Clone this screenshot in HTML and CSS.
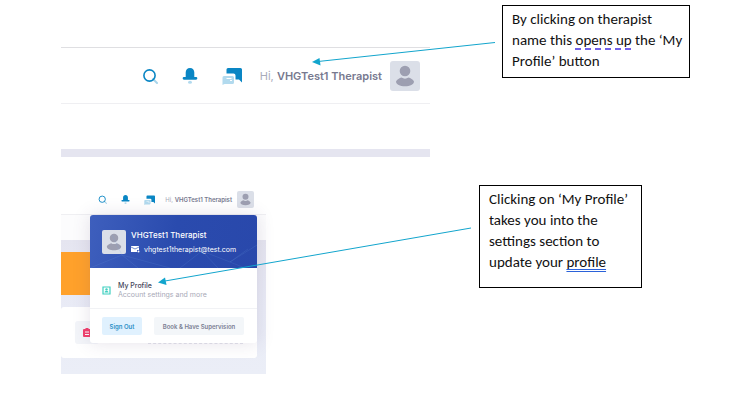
FILE: index.html
```html
<!DOCTYPE html>
<html lang="en">
<head>
  <meta charset="UTF-8" />
  <meta name="viewport" content="width=device-width, initial-scale=1" />
  <title>My Profile guide</title>
  <link rel="stylesheet" href="styles.css">
</head>
<body>
  <svg class="sprite" aria-hidden="true">
    <symbol id="search" viewBox="0 0 16 16">
      <path d="M11 11l4 4" stroke="#a9d5ea" stroke-width="2" stroke-linecap="round" />
      <circle cx="7.500" cy="7.500" r="5.600" fill="none" stroke="#0a86c4" stroke-width="1.600" />
    </symbol>
    <symbol id="bell" viewBox="0 0 16 16">
      <path d="M8 0c-2.700 0-4.300 1.800-4.300 4.500V9H2a1.300 1.300 0 0 0 0 2.700h12A1.300 1.300 0 0 0 14 9h-1.700V4.500C12.300 1.800 10.700 0 8 0z" fill="#0a86c4" />
      <ellipse cx="8" cy="14.300" rx="2" ry="1.500" fill="#b2daee" />
    </symbol>
    <symbol id="chat" viewBox="0 0 20 18">
      <path d="M6 1h12.500A1.500 1.500 0 0 1 20 2.500V15.500L17 12.500H13.500V8.500A2 2 0 0 0 11.500 6.500H4.500V2.500A1.500 1.500 0 0 1 6 1z" fill="#0a86c4" />
      <path d="M2 9h8.500a1.500 1.500 0 0 1 1.500 1.500v5a1.500 1.500 0 0 1-1.500 1.500H2.500L.5 18v-7.500A1.500 1.500 0 0 1 2 9z" fill="#b2daee" />
      <path d="M4.500 11.500h5M8 13.500h2" stroke="#fff" stroke-width="1" />
    </symbol>
    <symbol id="person" viewBox="0 0 30 30">
      <circle cx="15" cy="10" r="5.300" fill="#9d9fb1" />
      <path d="M6 20.500C7 18.300 9.500 17.200 11.500 16.500c2 1.500 5 1.500 7 0 2 .7 4.500 1.800 5.500 4 0 3-4 4.800-9 4.800s-9-1.800-9-4.800z" fill="#9d9fb1" />
    </symbol>
  </svg>

  <main class="guide">
    <section class="step">
      <div class="shot">
        <header class="topbar">
          <button class="icon-btn" aria-label="Search"><svg><use href="#search" /></svg></button>
          <button class="icon-btn" aria-label="Notifications"><svg><use href="#bell" /></svg></button>
          <button class="icon-btn chat" aria-label="Messages"><svg><use href="#chat" /></svg></button>
          <button class="user">
            <span class="name">Hi, <b>VHGTest1 Therapist</b></span>
            <svg class="avatar"><use href="#person" /></svg>
          </button>
        </header>
        <div class="blank"></div>
      </div>
      <p class="callout">By clicking on therapist name this <span class="grammar">opens up</span> the ‘My Profile’ button</p>
    </section>

    <section class="step step-profile">
      <div class="shot small">
        <header class="topbar">
          <button class="icon-btn" aria-label="Search"><svg><use href="#search" /></svg></button>
          <button class="icon-btn" aria-label="Notifications"><svg><use href="#bell" /></svg></button>
          <button class="icon-btn chat" aria-label="Messages"><svg><use href="#chat" /></svg></button>
          <button class="user">
            <span class="name">Hi, <b>VHGTest1 Therapist</b></span>
            <svg class="avatar"><use href="#person" /></svg>
          </button>
        </header>
        <div class="subbar"></div>
        <div class="content">
          <div class="banner"></div>
          <div class="card">
            <span class="card-icon">
              <svg viewBox="0 0 8 9"><path d="M1 1h1.500V0h3v1H7a1 1 0 0 1 1 1v6a1 1 0 0 1-1 1H1a1 1 0 0 1-1-1V2a1 1 0 0 1 1-1z" fill="#f2406c" /><path d="M2 4h4M2 6.500h4" stroke="#fff" /></svg>
            </span>
            <span class="card-line"></span>
          </div>
        </div>

        <div class="menu">
          <div class="menu-head">
            <svg class="net" viewBox="0 0 167 53" preserveAspectRatio="none">
              <path d="M0 53L32 40 48 53M32 40L22 20M32 40L80 53M90 53L112 36 140 47 167 30M112 36L128 53M140 47L155 53M140 47L158 34" />
            </svg>
            <svg class="avatar"><use href="#person" /></svg>
            <div class="who">
              <strong>VHGTest1 Therapist</strong>
              <a href="mailto:vhgtest1therapist@test.com">
                <svg viewBox="0 0 9 7"><path d="M0 0h8v4H6v2H0z" fill="#fff" /><path d="M0 1l4 2 4-2" fill="none" stroke="#3a5cb8" stroke-width=".7" /><circle cx="7.500" cy="5.500" r="1" fill="#fff" /></svg>
                vhgtest1therapist@test.com
              </a>
            </div>
          </div>
          <a class="menu-item" href="#profile">
            <svg viewBox="0 0 9 9"><path d="M1 1h7v7H1z" fill="none" stroke="#3fcfc0" stroke-width="1.200" /><circle cx="4.500" cy="3.400" r="1.200" fill="#3fcfc0" /><path d="M2.500 6.500a2 1.800 0 0 1 4 0z" fill="#3fcfc0" /></svg>
            <span><b>My Profile</b><small>Account settings and more</small></span>
          </a>
          <div class="menu-actions">
            <button class="sign-out">Sign Out</button>
            <button class="book">Book &amp; Have Supervision</button>
          </div>
        </div>
      </div>
      <p class="callout">Clicking on ‘My Profile’ takes you into the settings section to update your <span class="spelling">profile</span></p>
    </section>

    <svg class="arrows" viewBox="0 0 731 409" aria-hidden="true">
      <path d="M495 42.500L318 61.500M471 228L165 281" />
      <polygon points="312,62 319.500,58 320.500,65.500" />
      <polygon points="158,282.500 165,277.500 166.500,285" />
    </svg>
  </main>
</body>
</html>
```
FILE: styles.css
```css
* {
  box-sizing: border-box;
}

body {
  margin: 0;
  background: #fff;
  font-family: Inter, "Open Sans", sans-serif;
}

button {
  border: 0;
  padding: 0;
  background: none;
  font-family: inherit;
  cursor: pointer;
}

a {
  text-decoration: none;
}

.sprite {
  position: absolute;
  width: 0;
  height: 0;
}

.guide {
  position: relative;
  max-width: 731px;
  padding: 5px 41px 0 61px;
}

.step {
  display: flex;
  align-items: flex-start;
  justify-content: space-between;
}

.step-profile {
  margin-top: 28px;
  padding-right: 48px;
}

/* word-style text boxes */
.callout {
  width: 188px;
  margin: 0;
  padding: 3px 4px 5px 9px;
  border: 1px solid #000;
  font-family: Carlito, Lato, sans-serif;
  font-size: 15px;
  line-height: 21px;
  color: #111;
}

.step-profile .callout {
  width: 163px;
  padding-bottom: 14px;
}

.grammar {
  text-decoration: underline dashed #7160e8 2px;
  text-decoration-skip-ink: none;
  text-underline-offset: 3px;
}

.spelling {
  text-decoration: underline double #2b62d9 1px;
  text-decoration-skip-ink: none;
  text-underline-offset: 2px;
}

/* screenshots */
.shot {
  flex: 0 1 369px;
  margin-top: 42px;
  border-top: 1px solid #dfdfe2;
  border-bottom: 8px solid #e5e5f0;
}

.topbar {
  display: flex;
  align-items: center;
  justify-content: flex-end;
  height: 56px;
  padding-right: 10px;
  border-bottom: 1px solid #efeff2;
}

.blank {
  height: 45px;
}

.icon-btn {
  display: flex;
  margin-right: 24px;
}

.icon-btn svg {
  width: 16px;
  height: 16px;
}

.icon-btn.chat {
  margin-right: 18px;
}

.icon-btn.chat svg {
  width: 20px;
  height: 18px;
}

.user {
  display: flex;
  align-items: center;
  gap: 8px;
}

.name {
  font-size: 11px;
  color: #a9abba;
  white-space: nowrap;
}

.name b {
  font-weight: 600;
  color: #77798f;
}

.avatar {
  flex: none;
  width: 30px;
  height: 30px;
  border-radius: 3px;
  background: #dbdfe8;
}

.shot.small {
  position: relative;
  flex-basis: 205px;
  margin-top: 0;
  border: 0;
}

.small .topbar {
  height: 30px;
  padding: 0 12px 0 0;
}

.small .icon-btn {
  margin-right: 14px;
}

.small .icon-btn svg {
  width: 9px;
  height: 9px;
}

.small .icon-btn.chat {
  margin-right: 10px;
}

.small .icon-btn.chat svg {
  width: 11px;
  height: 10px;
}

.small .user {
  gap: 5px;
}

.small .name {
  font-size: 6px;
}

.small .topbar .avatar {
  width: 17px;
  height: 17px;
  border-radius: 2px;
}

.subbar {
  height: 25px;
  background: #fcfcfd;
}

.content {
  padding: 12px 9px 16px 0;
  background: linear-gradient(#e5e5f0, #e9ebf6 50%, #ebeef7);
}

.banner {
  width: 60px;
  height: 43px;
  background: #ffa12b;
}

.card {
  display: flex;
  justify-content: space-between;
  height: 51px;
  margin-top: 12px;
  padding: 14px;
  border-radius: 3px;
  background: #fff;
}

.card-icon {
  display: flex;
  align-items: center;
  justify-content: center;
  width: 24px;
  height: 23px;
  border-radius: 3px;
  background: #f3f5f9;
}

.card-icon svg {
  width: 8px;
  height: 9px;
}

.card-line {
  align-self: flex-end;
  width: 95px;
  border-bottom: 1px dashed #e4e4ec;
}

/* profile drop-down, sits over the page */
.menu {
  position: absolute;
  top: 30px;
  right: 9px;
  width: 167px;
  border-radius: 3px;
  background: #fff;
  box-shadow: 0 0 18px rgba(82, 63, 105, 0.15);
}

.menu-head {
  position: relative;
  display: flex;
  align-items: center;
  gap: 5px;
  height: 53px;
  padding-left: 12px;
  border-radius: 3px 3px 0 0;
  background: linear-gradient(100deg, #3e5fbd, #2a4bae 50%, #2948ab);
  color: #fff;
}

.menu-head .avatar {
  width: 24px;
  height: 24px;
  border-radius: 2px;
}

.net {
  position: absolute;
  inset: 0;
  width: 100%;
  height: 100%;
  fill: none;
  stroke: #6fa0e6;
  stroke-opacity: 0.25;
  stroke-width: 0.6;
}

.who {
  position: relative;
}

.who strong {
  display: block;
  font-size: 8px;
  line-height: 16px;
  font-weight: 500;
}

.who a {
  display: flex;
  align-items: center;
  gap: 4px;
  font-size: 7px;
  line-height: 14px;
  color: #fff;
}

.who a svg {
  width: 9px;
  height: 7px;
}

.menu-item {
  display: flex;
  align-items: center;
  gap: 7px;
  height: 41px;
  padding: 4px 12px 0;
  border-bottom: 1px solid #f1f2f5;
}

.menu-item svg {
  width: 9px;
  height: 9px;
}

.menu-item b,
.menu-item small {
  display: block;
  font-size: 7px;
  line-height: 9px;
}

.menu-item b {
  font-weight: 500;
  color: #44465a;
}

.menu-item small {
  color: #a8a9b7;
}

.menu-actions {
  display: flex;
  justify-content: space-between;
  padding: 8px 13px 8px 12px;
}

.menu-actions button {
  height: 18px;
  border-radius: 2px;
  font-size: 6px;
  font-weight: 600;
  white-space: nowrap;
}

.sign-out {
  width: 40px;
  background: #e0f1fe;
  color: #2c8fc6;
}

.book {
  width: 90px;
  background: #f3f6f9;
  color: #7b7e93;
}

.arrows {
  position: absolute;
  top: 0;
  left: 0;
  width: 731px;
  height: 409px;
  pointer-events: none;
}

.arrows path {
  stroke: #12a5cd;
  stroke-width: 1;
}

.arrows polygon {
  fill: #12a5cd;
}
```
